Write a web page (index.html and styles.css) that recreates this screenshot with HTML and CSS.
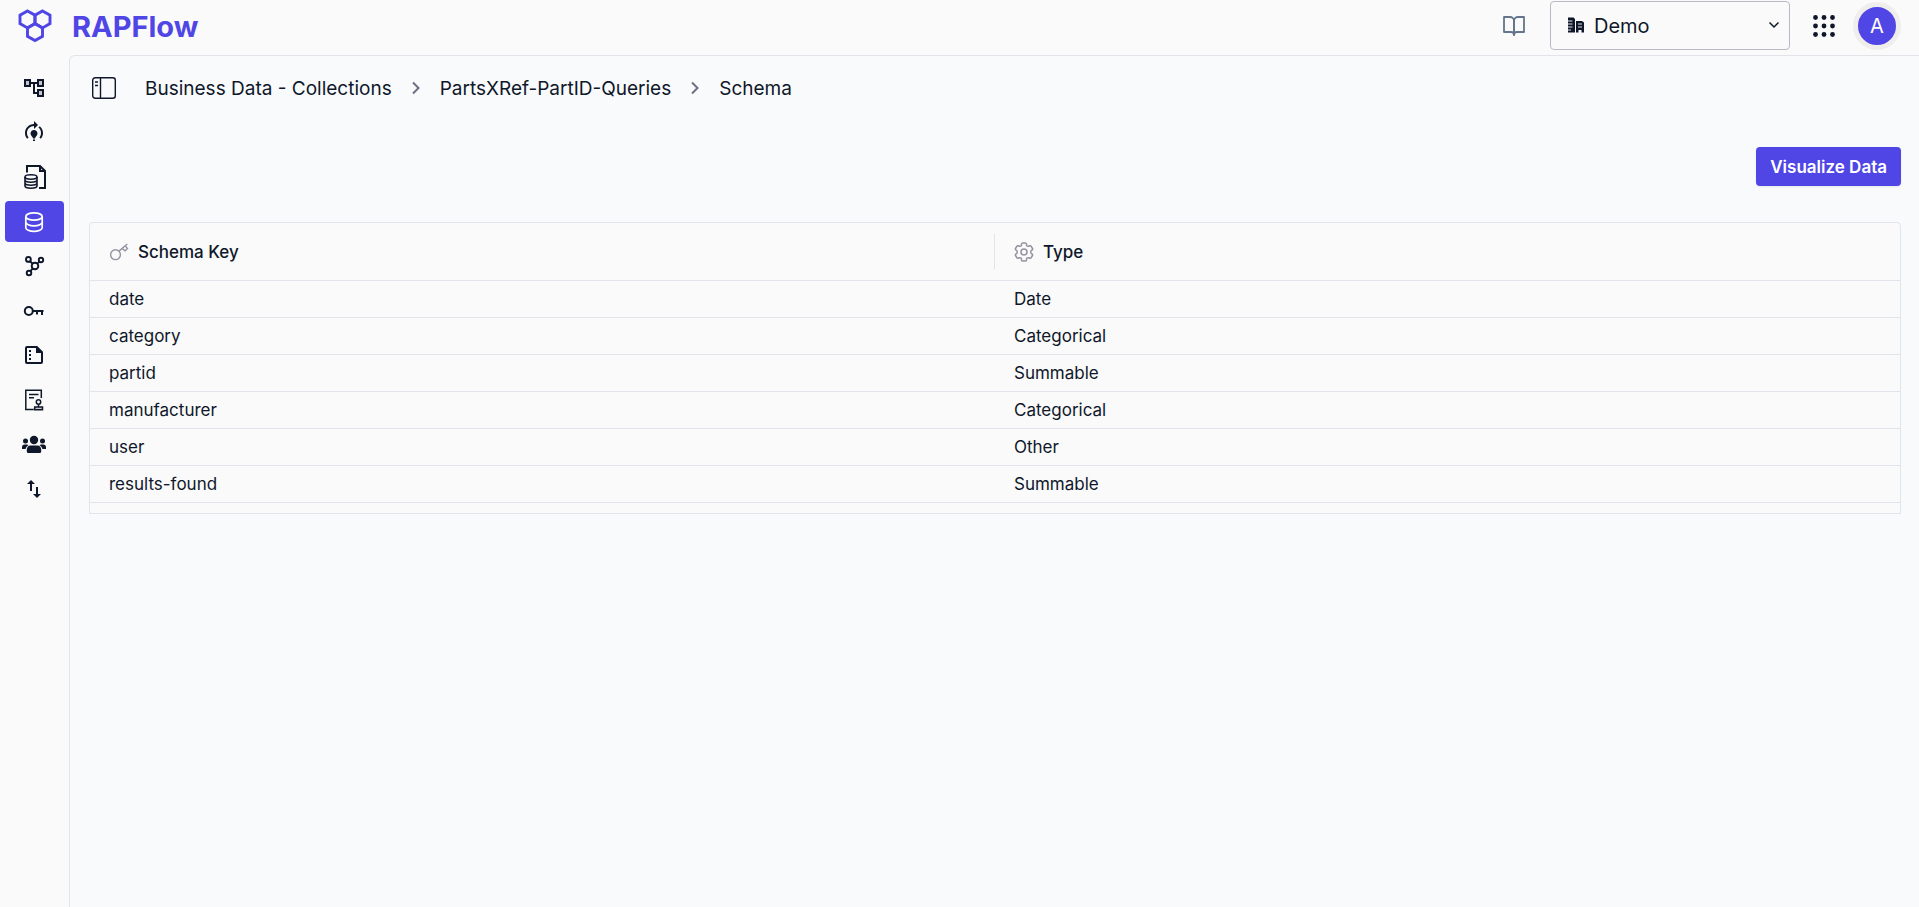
FILE: index.html
```html
<!DOCTYPE html>
<html lang="en">
  <head>
    <meta charset="UTF-8" />
    <meta name="viewport" content="width=device-width, initial-scale=1.0" />
    <title>RAPFlow</title>
    <link rel="stylesheet" href="styles.css" />
  </head>
  <body>
    <header class="topbar">
      <a href="#" class="brand">
        <svg class="brand-logo" viewBox="0 0 34 34" fill="none" stroke="currentColor" stroke-width="2.9">
          <path d="M9.5 2l7.500 4.200v8.400l-7.500 4.300L2 14.600V6.200z" />
          <path d="M24.500 2L32 6.200v8.400l-7.500 4.300-7.500-4.300V6.200z" />
          <path d="M17 14.600l7.500 4.300v8.400L17 31.600l-7.500-4.300v-8.400z" />
        </svg>
        <span class="brand-name">RAPFlow</span>
      </a>
      <div class="topbar-actions">
        <button class="icon-button docs" aria-label="Documentation">
          <svg width="24" height="24" viewBox="0 0 24 24" fill="none" stroke="currentColor" stroke-width="1.8" stroke-linejoin="round" stroke-linecap="round">
            <path d="M2 3h6a4 4 0 0 1 4 4v14a3 3 0 0 0-3-3H2z" />
            <path d="M22 3h-6a4 4 0 0 0-4 4v14a3 3 0 0 1 3-3h7z" />
          </svg>
        </button>
        <div class="tenant">
          <svg class="tenant-icon" width="18" height="16" viewBox="0 0 18 16">
            <path fill="currentColor" d="M1 .5h5.500l1.500 1.500v13.500H1zM9 4h6l2 1.500v10h-2.500V13h-3v2.500H9z" />
            <path stroke="#fafafa" d="M1 4h4.500M1 7h4.500M1 10h4.500M1 13h3M11 7h4M11 10h4" fill="none" stroke-width=".9" />
          </svg>
          <select class="tenant-select" aria-label="Tenant">
            <option>Demo</option>
          </select>
          <svg class="tenant-arrow" width="12" height="12" viewBox="0 0 12 12" fill="none" stroke="currentColor" stroke-width="1.5">
            <path d="M1.500 3.500L6 8l4.500-4.500" />
          </svg>
        </div>
        <button class="icon-button apps" aria-label="Apps">
          <svg width="24" height="24" viewBox="0 0 24 24" fill="currentColor">
            <circle cx="3.500" cy="3.500" r="2.400" /><circle cx="12" cy="3.500" r="2.400" /><circle cx="20.500" cy="3.500" r="2.400" />
            <circle cx="3.500" cy="12" r="2.400" /><circle cx="12" cy="12" r="2.400" /><circle cx="20.500" cy="12" r="2.400" />
            <circle cx="3.500" cy="20.500" r="2.400" /><circle cx="12" cy="20.500" r="2.400" /><circle cx="20.500" cy="20.500" r="2.400" />
          </svg>
        </button>
        <button class="avatar" aria-label="Account">A</button>
      </div>
    </header>

    <div class="layout">
      <nav class="sidebar" aria-label="Main">
        <a href="#" class="nav-link" aria-label="Workflows">
          <svg viewBox="0 0 24 24">
            <path fill="#c4c5c9" d="M4 5h3v4H4zM17 5h3v4h-3zM17 15h3v4h-3z" />
            <path fill="currentColor" d="M22 11V3h-7v3H9V3H2v8h7V8h2v10h4v3h7v-8h-7v3h-2V8h2v3h7zM7 9H4V5h3v4zm10 6h3v4h-3v-4zm0-10h3v4h-3V5z" />
          </svg>
        </a>
        <a href="#" class="nav-link" aria-label="Models">
          <svg viewBox="0 0 24 24" fill="currentColor">
            <path d="M15.500 13.500c0 2-2.500 3.500-2.500 5h-2c0-1.500-2.500-3-2.500-5 0-1.930 1.570-3.500 3.500-3.500s3.500 1.570 3.500 3.500zm-2.500 6h-2V21h2v-1.500zm6-6.500c0 1.680-.59 3.210-1.580 4.420l1.420 1.420C20.180 17.270 21 15.230 21 13c0-2.740-1.230-5.190-3.160-6.840l-1.420 1.420C17.990 8.860 19 10.820 19 13zm-3-8l-4-4v3c-4.970 0-9 4.030-9 9 0 2.230.82 4.270 2.160 5.840l1.420-1.420C5.590 16.210 5 14.680 5 13c0-3.860 3.140-7 7-7v3l4-4z" />
          </svg>
        </a>
        <a href="#" class="nav-link" aria-label="Documents">
          <svg viewBox="0 0 24 24" fill="none" stroke="currentColor">
            <path stroke-width="2" d="M5 7.500V1h13l5 5v17h-6M18 1v5h5" />
            <g stroke-width="1.600">
              <ellipse cx="9" cy="12" rx="6" ry="2.200" />
              <path d="M3 12v9c0 1.200 2.700 2.200 6 2.200s6-1 6-2.200v-9M3 15c0 1.200 2.700 2.200 6 2.200s6-1 6-2.200M3 18c0 1.200 2.700 2.200 6 2.200s6-1 6-2.200" />
            </g>
          </svg>
        </a>
        <a href="#" class="nav-link active" aria-label="Business Data" aria-current="page">
          <svg viewBox="0 0 24 24" fill="none" stroke="currentColor" stroke-width="1.700">
            <ellipse cx="12" cy="6.500" rx="8.200" ry="3.700" />
            <path d="M3.800 6.500v11.200c0 2 3.700 3.700 8.200 3.700s8.200-1.700 8.200-3.700V6.500M3.800 12.100c0 2 3.700 3.700 8.200 3.700s8.200-1.700 8.200-3.700" />
          </svg>
        </a>
        <a href="#" class="nav-link" aria-label="Connections">
          <svg viewBox="0 0 24 24" fill="none" stroke="currentColor" stroke-width="1.900">
            <circle cx="6.400" cy="5.400" r="2.400" />
            <circle cx="19" cy="6" r="2.200" />
            <circle cx="7" cy="19" r="2.300" />
            <circle cx="13" cy="12" r="3.300" />
            <path d="M8 7.200l2.700 2.600M17.500 7.600l-2.200 2M8.300 17.200l2.600-2.900" />
          </svg>
        </a>
        <a href="#" class="nav-link" aria-label="Credentials">
          <svg viewBox="0 0 24 24" fill="none" stroke="currentColor" stroke-width="2">
            <circle cx="6.800" cy="12" r="4" />
            <path d="M11 12h10.500M15 12v3.500M20 12v4" />
          </svg>
        </a>
        <a href="#" class="nav-link" aria-label="Forms">
          <svg viewBox="0 0 24 24">
            <path fill="none" stroke="currentColor" stroke-width="2" d="M14.500 4H5a1 1 0 0 0-1 1v14a1 1 0 0 0 1 1h14a1 1 0 0 0 1-1V9.500z" />
            <path fill="currentColor" d="M14 3h1l6 6v1h-7zM7 7h2v2H7zM7 11h2v2H7zM7 15h2v2H7z" />
          </svg>
        </a>
        <a href="#" class="nav-link" aria-label="Approvals">
          <svg viewBox="0 0 24 24" fill="none" stroke="currentColor" stroke-width="1.500">
            <path d="M19.300 10V2.300H3.800v19.200h8" />
            <path d="M7 6.500h9.500M7 9.800h5" />
            <circle cx="16.500" cy="14" r="2.200" />
            <path d="M16.500 16.200V19" />
            <path fill="#c4c5c9" d="M12.700 19h7.800v2.800h-7.800z" />
          </svg>
        </a>
        <a href="#" class="nav-link" aria-label="Users">
          <svg viewBox="0 0 24 24" fill="currentColor">
            <circle cx="12" cy="7" r="4.200" />
            <circle cx="3.500" cy="8" r="2.500" />
            <circle cx="20.500" cy="8" r="2.500" />
            <path d="M8.500 12.500h7c2.200 0 3.700 1.800 3.700 4v2c0 .9-.6 1.500-1.500 1.500H6.300c-.9 0-1.500-.6-1.500-1.500v-2c0-2.200 1.500-4 3.700-4zM2.500 11.500h2.300c.7 0 1.300.3 1.700.7-1.600.8-2.700 2.300-2.900 3.800H0v-2c0-1.400 1.100-2.500 2.500-2.500zM21.500 11.500h-2.300c-.7 0-1.300.3-1.700.7 1.600.8 2.700 2.300 2.900 3.800H24v-2c0-1.400-1.100-2.500-2.500-2.500z" />
          </svg>
        </a>
        <a href="#" class="nav-link" aria-label="Import and export">
          <svg viewBox="0 0 24 24" fill="currentColor">
            <path d="M9 3l4 4h-3v7H8V7H5zM15 21l-4-4h3v-7h2v7h3z" />
          </svg>
        </a>
      </nav>

      <main class="content">
        <div class="crumb-bar">
          <button class="icon-button panel-toggle" aria-label="Toggle panel">
            <svg width="24" height="22" viewBox="0 0 24 22" fill="none" stroke="currentColor" stroke-width="1.400">
              <rect x=".7" y=".7" width="22.600" height="20.600" rx="2.500" />
              <path d="M8.500 1v20M3 5h3M3 8.500h3" />
            </svg>
          </button>
          <nav class="breadcrumbs" aria-label="Breadcrumb">
            <a href="#">Business Data - Collections</a>
            <svg class="crumb-arrow" viewBox="0 0 10 14"><path d="M2 1.500L7.500 7 2 12.500" /></svg>
            <a href="#">PartsXRef-PartID-Queries</a>
            <svg class="crumb-arrow" viewBox="0 0 10 14"><path d="M2 1.500L7.500 7 2 12.500" /></svg>
            <a href="#" aria-current="page">Schema</a>
          </nav>
        </div>

        <div class="actions">
          <button class="visualize">Visualize Data</button>
        </div>

        <div class="table-card">
          <table class="schema-table">
            <thead>
              <tr>
                <th scope="col">
                  <div class="col-head">
                    <svg width="20" height="20" viewBox="0 0 20 20" fill="none" stroke="currentColor" stroke-width="1.400">
                      <circle cx="6.500" cy="12.700" r="4.900" />
                      <path d="M10 9.100L18.300 2M13.200 6.500l2.800 2.300 2.500-2.400-2.300-2.500" />
                    </svg>
                    Schema Key
                  </div>
                </th>
                <th scope="col">
                  <div class="col-head">
                    <svg width="20" height="20" viewBox="2 2 20 20" fill="none" stroke="currentColor" stroke-width="1.500" stroke-linejoin="round">
                      <path d="M9.600 3.900c.1-.5.500-.9 1.100-.9h2.600c.6 0 1 .4 1.100.9l.2 1.300c.1.400.3.700.7.900l.2.100c.3.200.7.200 1.100.1l1.200-.5c.5-.2 1.100 0 1.400.5l1.300 2.200c.3.500.2 1.100-.3 1.400l-1 .8c-.3.200-.4.600-.4 1v.6c0 .4.100.7.400 1l1 .8c.4.400.5 1 .3 1.400l-1.300 2.200c-.3.500-.9.700-1.400.5l-1.200-.5c-.4-.1-.8-.1-1.100.1l-.2.100c-.4.200-.6.500-.7.900l-.2 1.300c-.1.500-.5.900-1.100.9h-2.600c-.6 0-1-.4-1.100-.9l-.2-1.300c-.1-.4-.3-.7-.7-.9l-.2-.1c-.3-.2-.7-.2-1.100-.1l-1.200.5c-.5.200-1.100 0-1.400-.5l-1.300-2.200c-.3-.5-.2-1.100.3-1.400l1-.8c.3-.2.400-.6.400-1v-.6c0-.4-.1-.7-.4-1l-1-.8c-.4-.4-.5-1-.3-1.400l1.300-2.200c.3-.5.900-.7 1.400-.5l1.200.5c.4.100.8.100 1.100-.1l.2-.1c.4-.2.6-.5.700-.9z" />
                      <circle cx="12" cy="12" r="3" />
                    </svg>
                    Type
                  </div>
                </th>
              </tr>
            </thead>
            <tbody>
              <tr><td>date</td><td>Date</td></tr>
              <tr><td>category</td><td>Categorical</td></tr>
              <tr><td>partid</td><td>Summable</td></tr>
              <tr><td>manufacturer</td><td>Categorical</td></tr>
              <tr><td>user</td><td>Other</td></tr>
              <tr><td>results-found</td><td>Summable</td></tr>
            </tbody>
          </table>
        </div>
      </main>
    </div>
  </body>
</html>
```
FILE: styles.css
```css
* {
  box-sizing: border-box;
}

body {
  margin: 0;
  min-height: 100vh;
  display: flex;
  flex-direction: column;
  font-family: Inter, sans-serif;
  font-size: 17px;
  color: #0f172a;
  background: #fafafa;
}

a {
  color: inherit;
  text-decoration: none;
}

button,
select {
  font-family: inherit;
  color: inherit;
  cursor: pointer;
}

svg {
  display: block;
}

.topbar {
  display: flex;
  justify-content: space-between;
  align-items: flex-start;
  height: 55px;
  padding: 1px 18px;
}

.brand {
  display: flex;
  align-items: center;
  gap: 20px;
  height: 50px;
  color: #4f46e5;
}

.brand-logo {
  width: 34px;
  height: 34px;
}

.brand-name {
  font-size: 29px;
  font-weight: 700;
}

.topbar-actions {
  display: flex;
  align-items: center;
}

.icon-button {
  padding: 0;
  border: none;
  background: none;
}

.docs {
  margin-right: 24px;
  color: #64748b;
}

.tenant {
  position: relative;
  width: 240px;
}

.tenant-select {
  appearance: none;
  width: 100%;
  height: 49px;
  padding: 0 32px 0 43px;
  font-size: 20px;
  border: 1px solid #b9bac6;
  border-radius: 4px;
  background: transparent;
}

.tenant-icon {
  position: absolute;
  left: 17px;
  top: 16px;
}

.tenant-arrow {
  position: absolute;
  right: 10px;
  top: 18px;
}

.apps {
  margin: 0 17px 0 22px;
}

.avatar {
  width: 48px;
  height: 48px;
  padding: 0;
  border: 5px solid #f0eded;
  border-radius: 50%;
  background: #4f46e5;
  color: #fff;
  font-size: 20px;
}

.layout {
  flex: 1;
  display: flex;
}

.sidebar {
  display: grid;
  grid-auto-rows: 1fr;
  gap: 3px;
  align-self: flex-start;
  width: 69px;
  height: 443px;
  margin-top: 12px;
  padding: 0 5px;
}

.nav-link {
  display: flex;
  align-items: center;
  justify-content: center;
  padding-right: 2px;
  border-radius: 4px;
}

.nav-link svg {
  width: 24px;
  height: 24px;
}

.nav-link.active {
  background: #4f46e5;
  color: #fff;
}

.content {
  flex: 1;
  padding: 16px 18px 16px 19px;
  border-top: 1px solid #e2e4e9;
  border-left: 1px solid #e2e4e9;
  border-top-left-radius: 6px;
  background: #f9fafc;
}

.crumb-bar {
  display: flex;
  align-items: center;
  gap: 29px;
  height: 32px;
  padding-left: 3px;
}

.breadcrumbs {
  display: flex;
  align-items: center;
  gap: 19px;
  font-size: 19px;
}

.crumb-arrow {
  width: 10px;
  height: 14px;
  fill: none;
  stroke: #6b7080;
  stroke-width: 2;
}

.actions {
  display: flex;
  justify-content: flex-end;
  margin: 43px 0 36px;
}

.visualize {
  height: 39px;
  padding: 0 14px;
  border: none;
  border-radius: 4px;
  background: #4f46e5;
  color: #fff;
  font-size: 17px;
  font-weight: 600;
  box-shadow: 0 1px 2px rgba(0, 0, 0, 0.08);
}

.table-card {
  padding-bottom: 10px;
  border: 1px solid #e2e4ec;
  border-radius: 4px 4px 0 0;
  background: #fafafa;
}

.schema-table {
  width: 100%;
  table-layout: fixed;
  border-collapse: separate;
  border-spacing: 0;
}

.schema-table th,
.schema-table td {
  border-bottom: 1px solid #e2e4ec;
  text-align: left;
}

.schema-table th {
  padding: 11px 0;
  font-weight: 500;
}

.schema-table td {
  height: 37px;
  padding: 0 19px;
}

.col-head {
  display: flex;
  align-items: center;
  gap: 9px;
  height: 35px;
  padding: 0 19px;
}

.col-head svg {
  color: #9394a0;
}

th:not(:last-child) .col-head {
  border-right: 1px solid #e2e4ec;
}
```
